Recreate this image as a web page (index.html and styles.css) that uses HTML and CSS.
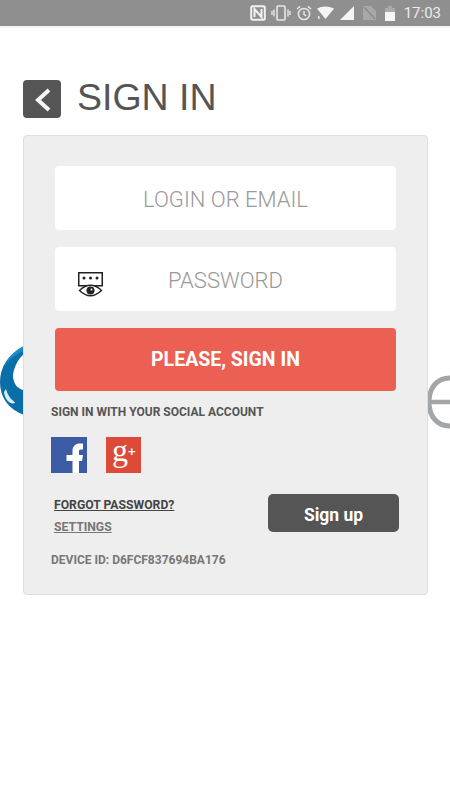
FILE: index.html
```html
<!DOCTYPE html>
<html lang="en">
<head>
    <meta charset="UTF-8">
    <meta name="viewport" content="width=device-width, initial-scale=1.0">
    <title>Sign In</title>
    <link rel="stylesheet" href="styles.css">
</head>
<body>

    <div class="status-bar">
        <svg class="st-icon" width="16" height="16" viewBox="0 0 16 16">
            <rect x="1.2" y="1.2" width="13.6" height="13.6" rx="1.5" fill="none" stroke="#f2f2f2" stroke-width="2"/>
            <path d="M4.5 12V4l7 8V4" fill="none" stroke="#f2f2f2" stroke-width="2"/>
        </svg>
        <svg class="st-icon" width="20" height="16" viewBox="0 0 20 16">
            <rect x="6" y="1" width="8" height="14" rx="1" fill="none" stroke="#e8e8e8" stroke-width="1.6"/>
            <path d="M3 4.5v7M1 6v4M17 4.5v7M19 6v4" stroke="#e8e8e8" stroke-width="1.4"/>
        </svg>
        <svg class="st-icon" width="16" height="16" viewBox="0 0 16 16">
            <circle cx="8" cy="9" r="5.6" fill="none" stroke="#e8e8e8" stroke-width="1.5"/>
            <path d="M8 6v3.4l2.2 1.4M1 4l3-2.6M15 4l-3-2.6" fill="none" stroke="#e8e8e8" stroke-width="1.4"/>
        </svg>
        <svg class="st-icon" width="18" height="14" viewBox="0 0 18 14">
            <path d="M0 2.5Q8-1.500 17 2.500L8.500 13Z" fill="#f5f5f5"/>
            <rect x="1" y="10" width="1.500" height="3" fill="#e8e8e8"/>
        </svg>
        <svg class="st-icon" width="14" height="14" viewBox="0 0 14 14">
            <path d="M14 0V14H0Z" fill="#f5f5f5"/>
        </svg>
        <svg class="st-icon st-gap" width="13" height="14" viewBox="0 0 13 14">
            <path d="M0 0H8L13 5V14H0Z" fill="#a8a8a8"/>
            <path d="M1 1L12 13" stroke="#8a8a8a" stroke-width="1.400"/>
        </svg>
        <svg class="st-icon st-gap" width="10" height="15" viewBox="0 0 10 15">
            <path d="M3 0H7V2H10V15H0V2H3Z" fill="#a9a9a9"/>
            <rect y="6" width="10" height="9" fill="#f5f5f5"/>
        </svg>
        <span class="clock">17:03</span>
    </div>

    <!-- logo sits behind the card, only the edges show -->
    <svg class="bg-logo-left" width="24" height="71" viewBox="0 0 24 71">
        <path d="M24 1C8 9 0 22 0 37C0 52 8 64 24 70Z" fill="#0a6fa8"/>
        <path d="M24 9C18 14 14 22 13 30C13 38 17 44 24 45Z" fill="#fff"/>
        <path d="M24 1C14 6 8 13 4 22C8 16 15 9 24 6Z" fill="#1d8cc4"/>
        <path d="M4 47C5 55 10 60 15 58C15 56 9 55 6 44Z" fill="#d8ecf5"/>
    </svg>
    <svg class="bg-logo-right" width="24" height="54" viewBox="0 0 24 54">
        <path d="M24 3C10 3 3 14 3 27C3 40 10 51 24 51" fill="none" stroke="#a3a6a8" stroke-width="5"/>
        <path d="M3 27H24" stroke="#a3a6a8" stroke-width="4.500"/>
    </svg>

    <div class="page">
        <div class="header">
            <a class="back-btn">
                <svg width="20" height="26" viewBox="0 0 20 26">
                    <path d="M17 4L6 14l11 10" fill="none" stroke="#f5f5f5" stroke-width="4"/>
                </svg>
            </a>
            <h1>SIGN IN</h1>
        </div>

        <div class="card">
            <div class="field">LOGIN OR EMAIL</div>
            <div class="field">
                <svg class="pass-icon" width="26" height="26" viewBox="0 0 26 26">
                    <rect x="0.750" y="0.750" width="23.500" height="13" fill="#fff" stroke="#222" stroke-width="1.500"/>
                    <circle cx="6" cy="6" r="1.500" fill="#222"/>
                    <circle cx="12.500" cy="6" r="1.500" fill="#222"/>
                    <circle cx="19" cy="6" r="1.500" fill="#222"/>
                    <path d="M1.500 18.500Q12.500 8 23.500 18.500Q12.500 29 1.500 18.500Z" fill="#fff" stroke="#222" stroke-width="1.400"/>
                    <circle cx="12.500" cy="18.500" r="4" fill="#222"/>
                    <circle cx="13.500" cy="17.500" r="1" fill="#fff"/>
                </svg>
                PASSWORD
            </div>
            <button class="signin-btn">PLEASE, SIGN IN</button>

            <div class="social-title">SIGN IN WITH YOUR SOCIAL ACCOUNT</div>
            <div class="social">
                <div class="soc fb">
                    <svg width="36" height="36" viewBox="0 0 36 36">
                        <path d="M21.500 36V24H15.500V18H21.500V14C21.500 9 24.500 6.500 29 6.500H32V12.500H29.500C28 12.500 28 13.500 28 14.500V18H32L31 24H28V36Z" fill="#fff"/>
                    </svg>
                </div>
                <div class="soc gp">g<sup>+</sup></div>
            </div>

            <div class="bottom">
                <div class="links">
                    <a class="forgot">FORGOT PASSWORD?</a>
                    <a class="settings">SETTINGS</a>
                </div>
                <button class="signup-btn">Sign up</button>
            </div>

            <div class="device">DEVICE ID: D6FCF837694BA176</div>
        </div>
    </div>

</body>
</html>
```

FILE: styles.css
```css
body {
    font-family: Roboto, Arial, sans-serif;
    background-color: #fff;
    margin: 0;
    height: 800px;
    overflow: hidden;
    position: relative;
}
.status-bar {
    height: 26px;
    background-color: #8f8f8f;
    border-bottom: 2px solid #f4f4f4;
    display: flex;
    align-items: center;
    justify-content: flex-end;
    gap: 5px;
    padding-right: 9px;
}
.st-gap {
    margin-left: 4px;
}
.clock {
    color: #ececec;
    font-size: 15px;
    margin-left: 4px;
}
.bg-logo-left {
    position: absolute;
    left: 0;
    top: 345px;
}
.bg-logo-right {
    position: absolute;
    left: 426px;
    top: 375px;
}
.page {
    position: relative;
    padding: 52px 22px 0 23px;
}
.header {
    display: flex;
    align-items: center;
    gap: 16px;
    height: 38px;
}
.back-btn {
    width: 38px;
    height: 38px;
    background-color: #555;
    border-radius: 4px;
    display: flex;
    align-items: center;
    justify-content: center;
}
h1 {
    margin: -4px 0 0;
    font-family: "Liberation Sans", Arial, sans-serif;
    font-size: 37.5px;
    font-weight: normal;
    color: #555;
}
.card {
    box-sizing: border-box;
    margin-top: 17px;
    height: 460px;
    background-color: #eeeeee;
    border: 1px solid #dedede;
    border-radius: 4px;
    padding: 30px 31px 0 27px;
}
.field {
    position: relative;
    height: 64px;
    margin: 0 0 17px 4px;
    padding-top: 2px;
    box-sizing: border-box;
    background: white;
    border-radius: 4px;
    display: flex;
    align-items: center;
    justify-content: center;
    font-size: 22px;
    font-weight: 300;
    color: #999;
}
.pass-icon {
    position: absolute;
    left: 23px;
    top: 25px;
}
.signin-btn {
    display: block;
    box-sizing: border-box;
    width: calc(100% - 4px);
    height: 63px;
    margin-left: 4px;
    background-color: #ec6054;
    color: white;
    border: none;
    border-radius: 4px;
    font-family: Roboto, Arial, sans-serif;
    font-size: 19.5px;
    font-weight: bold;
}
.social-title {
    margin-top: 14px;
    font-size: 12px;
    font-weight: bold;
    color: #555;
    line-height: 14px;
}
.social {
    display: flex;
    gap: 19px;
    margin-top: 18px;
}
.soc {
    width: 36px;
    height: 36px;
    color: white;
}
.fb {
    background-color: #3b5ca5;
}
.fb svg {
    display: block;
}
.gp {
    width: 35px;
    background-color: #dc4a38;
    font-family: "Liberation Serif", serif;
    font-size: 32px;
    line-height: 26px;
    padding-left: 6px;
    box-sizing: border-box;
}
.gp sup {
    font-size: 13px;
    font-family: "Liberation Sans", Arial, sans-serif;
    font-weight: bold;
    line-height: 0;
    vertical-align: 5px;
}
.bottom {
    display: flex;
    justify-content: space-between;
    align-items: flex-start;
    margin-top: 21px;
    margin-right: -3px;
}
.links {
    display: flex;
    flex-direction: column;
    gap: 8px;
    margin-left: 3px;
    padding-top: 4px;
}
.forgot, .settings {
    font-size: 12.2px;
    font-weight: bold;
    line-height: 14px;
    text-decoration: underline;
}
.forgot {
    color: #444;
}
.settings {
    color: #777;
}
.signup-btn {
    width: 131px;
    height: 38px;
    padding-top: 5px;
    background-color: #555;
    color: white;
    border: none;
    border-radius: 5px;
    font-family: Roboto, Arial, sans-serif;
    font-size: 17.5px;
    font-weight: bold;
}
.device {
    margin-top: 19px;
    font-size: 12px;
    font-weight: bold;
    line-height: 14px;
    color: #777;
}
```
